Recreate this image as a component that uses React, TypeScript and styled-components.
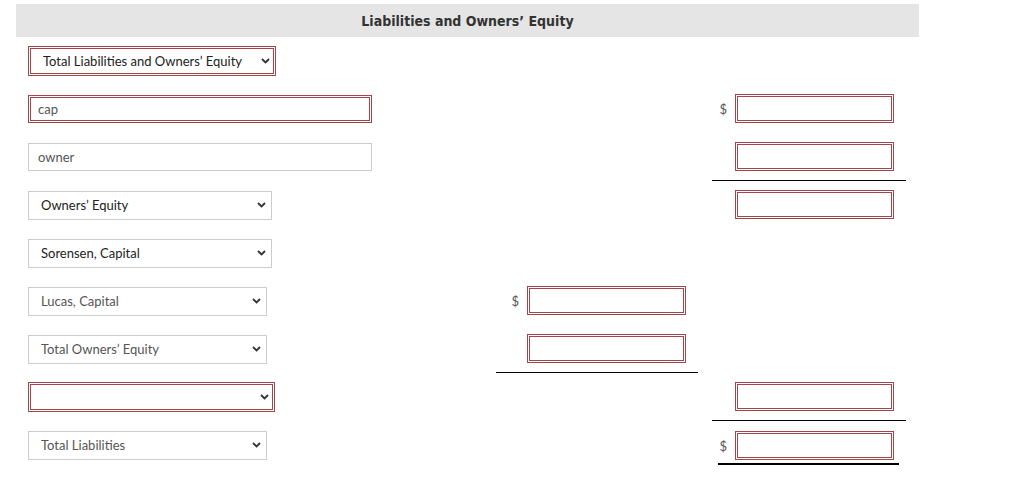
import React from 'react';
import styled, { createGlobalStyle } from 'styled-components';

const GlobalStyle = createGlobalStyle`
  body {
    margin: 0;
    background: #fff;
    font-family: Lato, "Open Sans", Arial, sans-serif;
  }
`;

const RED = '#a0474a';

const Page = styled.div`
  padding: 4px 0 0 16px;
  width: 903px;
`;

const Header = styled.div`
  height: 33px;
  background: #e5e5e5;
  display: flex;
  align-items: center;
  justify-content: center;
  font-family: "DejaVu Sans Condensed", "DejaVu Sans", sans-serif;
  font-weight: bold;
  font-size: 14px;
  color: #333;
`;

const Row = styled.div`
  display: grid;
  grid-template-columns: 466px 202px 194px;
  column-gap: 14px;
  height: 48px;
`;

const LabelCell = styled.div`
  display: flex;
  align-items: center;
  padding-left: 12px;
`;

const AmountCell = styled.div<{ $rule?: boolean; $end?: boolean }>`
  display: flex;
  align-items: ${p => (p.$end ? 'flex-end' : 'center')};
  justify-content: flex-end;
  padding-right: ${p => (p.$end ? '7px' : '12px')};
  padding-bottom: ${p => (p.$end ? '4px' : '0')};
  border-bottom: ${p => (p.$rule ? '1px solid #000' : '1px solid transparent')};
`;

const GrandTotal = styled.div`
  display: flex;
  align-items: center;
  padding: 0 5px 3px 1px;
  border-bottom: 2px solid #000;
  margin-bottom: -1px;
`;

const Dollar = styled.span`
  font-size: 13px;
  color: #555;
  margin-right: 8px;
`;

const AmountBox = styled.input`
  box-sizing: border-box;
  width: 159px;
  height: 29px;
  border: 3px double ${RED};
  background: #fff;
  outline: none;
`;

const TextBox = styled.input<{ $error?: boolean }>`
  box-sizing: border-box;
  width: 344px;
  height: 28px;
  border: ${p => (p.$error ? `3px double ${RED}` : '1px solid #ccc')};
  padding: 0 8px 0 ${p => (p.$error ? '7px' : '9px')};
  font-family: Lato, sans-serif;
  font-size: 13px;
  color: #555;
  background: #fff;
  outline: none;
`;

const SelectWrap = styled.div`
  position: relative;
  display: flex;
`;

const Select = styled.select<{ $w: number; $error?: boolean; $strong?: boolean }>`
  appearance: none;
  box-sizing: border-box;
  width: ${p => p.$w}px;
  height: ${p => (p.$error ? 30 : 29)}px;
  padding: 0 20px 0 12px;
  border: ${p => (p.$error ? `3px double ${RED}` : '1px solid #ccc')};
  border-radius: 0;
  background: #fff;
  font-family: Lato, sans-serif;
  font-size: 13px;
  color: ${p => (p.$strong ? '#222' : '#555')};
  outline: none;
`;

const Chevron = styled.svg`
  position: absolute;
  right: 6px;
  top: 50%;
  margin-top: -3px;
  width: 9px;
  height: 6px;
  pointer-events: none;
`;

function Dropdown({ value, w, error, strong }: { value: string; w: number; error?: boolean; strong?: boolean }) {
  return (
    <SelectWrap>
      <Select $w={w} $error={error} $strong={strong} value={value} onChange={() => {}}>
        <option value={value}>{value}</option>
      </Select>
      <Chevron viewBox="0 0 9 6">
        <path d="M1 1 L4.5 4.5 L8 1" fill="none" stroke="#333" strokeWidth="1.8" />
      </Chevron>
    </SelectWrap>
  );
}

export default function App() {
  return (
    <Page>
      <GlobalStyle />
      <Header>Liabilities and Owners’ Equity</Header>

      <Row>
        <LabelCell>
          <Dropdown value="Total Liabilities and Owners’ Equity" w={248} error strong />
        </LabelCell>
        <AmountCell />
        <AmountCell />
      </Row>

      <Row>
        <LabelCell>
          <TextBox $error defaultValue="cap" />
        </LabelCell>
        <AmountCell />
        <AmountCell>
          <Dollar>$</Dollar>
          <AmountBox />
        </AmountCell>
      </Row>

      <Row>
        <LabelCell>
          <TextBox defaultValue="owner" />
        </LabelCell>
        <AmountCell />
        <AmountCell $rule>
          <AmountBox />
        </AmountCell>
      </Row>

      <Row>
        <LabelCell>
          <Dropdown value="Owners’ Equity" w={244} strong />
        </LabelCell>
        <AmountCell />
        <AmountCell>
          <AmountBox />
        </AmountCell>
      </Row>

      <Row>
        <LabelCell>
          <Dropdown value="Sorensen, Capital" w={244} strong />
        </LabelCell>
        <AmountCell />
        <AmountCell />
      </Row>

      <Row>
        <LabelCell>
          <Dropdown value="Lucas, Capital" w={239} />
        </LabelCell>
        <AmountCell>
          <Dollar>$</Dollar>
          <AmountBox />
        </AmountCell>
        <AmountCell />
      </Row>

      <Row>
        <LabelCell>
          <Dropdown value="Total Owners’ Equity" w={239} />
        </LabelCell>
        <AmountCell $rule>
          <AmountBox />
        </AmountCell>
        <AmountCell />
      </Row>

      <Row>
        <LabelCell>
          <Dropdown value="" w={247} error />
        </LabelCell>
        <AmountCell />
        <AmountCell $rule>
          <AmountBox />
        </AmountCell>
      </Row>

      <Row>
        <LabelCell>
          <Dropdown value="Total Liabilities" w={239} />
        </LabelCell>
        <AmountCell />
        <AmountCell $end>
          <GrandTotal>
            <Dollar>$</Dollar>
            <AmountBox />
          </GrandTotal>
        </AmountCell>
      </Row>
    </Page>
  );
}
